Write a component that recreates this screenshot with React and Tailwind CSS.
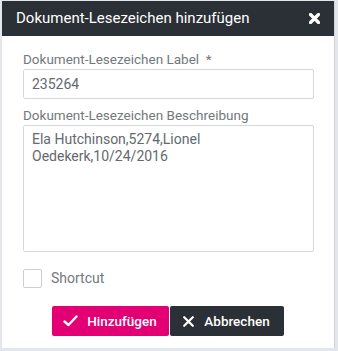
import React from "react";

const font = { fontFamily: "Roboto, 'Noto Sans', sans-serif" };

export default function App() {
  return (
    <div
      className="w-[338px] h-[351px] bg-[#e3e6ea] pl-[2px] pt-[1px] pr-[3px] pb-[3px]"
      style={font}
    >
      <div className="h-full bg-white flex flex-col border-r border-[#cfd3d8]">
        {/* Header */}
        <div className="h-[35px] bg-[#2b3036] flex items-center justify-between pl-[14px] pr-[14px]">
          <span className="text-white text-[15px] leading-none">Dokument-Lesezeichen hinzufügen</span>
          <svg width="11" height="11" viewBox="0 0 11 11">
            <path d="M1.5 1.5 L9.5 9.5 M9.5 1.5 L1.5 9.5" stroke="#fff" strokeWidth="3.2" strokeLinecap="round" />
          </svg>
        </div>

        {/* Body */}
        <div className="flex flex-col pl-[21px] pr-[20px] pt-[15px]">
          <label className="text-[13.5px] leading-[17px] text-[#73787d]">
            Dokument-Lesezeichen Label&nbsp; *
          </label>
          <input
            type="text"
            defaultValue="235264"
            className="mt-[1px] h-[30px] border border-[#d5d9de] rounded-[2px] px-[8px] text-[14px] text-[#64696e] focus:outline-none"
          />

          <label className="mt-[8px] text-[13.5px] leading-[17px] text-[#73787d]">
            Dokument-Lesezeichen Beschreibung
          </label>
          <textarea
            defaultValue={"Ela Hutchinson,5274,Lionel Oedekerk,10/24/2016"}
            className="mt-[1px] h-[127px] resize-none border border-[#d5d9de] rounded-[2px] px-[8px] pt-[5px] text-[14px] leading-[17px] text-[#64696e] focus:outline-none"
          />

          <div className="mt-[16px] flex items-center gap-[9px]">
            <span className="w-[19px] h-[19px] border border-[#ccd0d5] rounded-[2px] bg-white" />
            <span className="text-[14px] text-[#73787d]">Shortcut</span>
          </div>

          <div className="mt-[17px] flex justify-center gap-[1px] pr-[2px]">
            <button className="w-[117px] h-[30px] bg-[#e20074] rounded-[2px] flex items-center justify-center gap-[9px] text-white text-[13.5px] font-medium">
              <svg width="15" height="12" viewBox="0 0 15 12">
                <path d="M1.5 6.5 L5.5 10 L13.5 1.5" fill="none" stroke="#fff" strokeWidth="2.4" strokeLinecap="round" strokeLinejoin="round" />
              </svg>
              Hinzufügen
            </button>
            <button className="w-[114px] h-[30px] bg-[#2b3036] rounded-[2px] flex items-center justify-center gap-[10px] text-white text-[13.5px] font-medium">
              <svg width="11" height="11" viewBox="0 0 11 11">
                <path d="M1.2 1.2 L9.8 9.8 M9.8 1.2 L1.2 9.8" stroke="#fff" strokeWidth="2.2" strokeLinecap="round" />
              </svg>
              Abbrechen
            </button>
          </div>
        </div>
      </div>
    </div>
  );
}
